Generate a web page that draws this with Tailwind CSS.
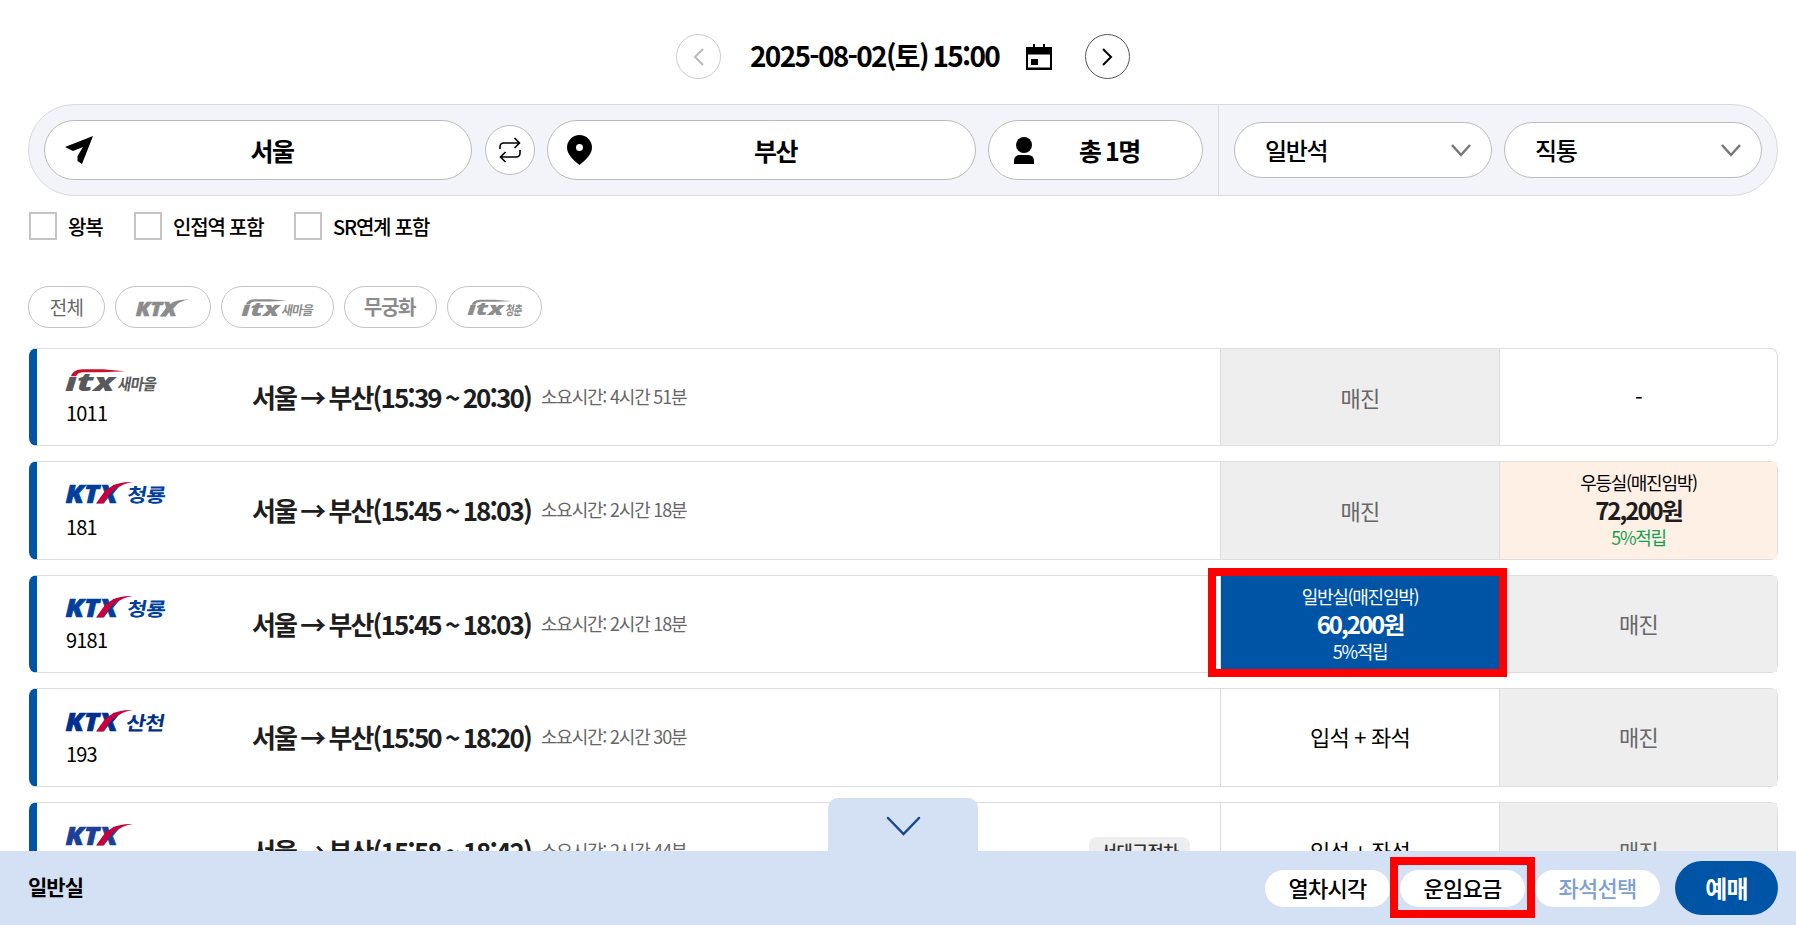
<!DOCTYPE html>
<html lang="ko">
<head>
  <meta charset="UTF-8">
  <meta name="viewport" content="width=device-width, initial-scale=1">
  <title>승차권 예매 - 열차 조회</title>
  <script src="https://cdn.jsdelivr.net/npm/@tailwindcss/browser@4"></script>
  <style>
    /* keep the colon on the baseline between digits */
    body, strong { font-variant-ligatures: none; font-feature-settings: "calt" 0, "clig" 0, "liga" 0; }
  </style>
</head>
<body class="relative h-[925px] overflow-hidden bg-white font-['Noto_Sans_CJK_KR',sans-serif] tracking-[-0.8px] text-black">

  <!-- Logo symbols: letters use currentColor, swoosh uses the inherited fill -->
  <svg class="hidden">
    <symbol id="ktx" viewBox="0 0 68 24" overflow="visible">
      <text x="-0.500" y="23" textLength="52" lengthAdjust="spacingAndGlyphs" fill="currentColor" stroke="currentColor" stroke-width="0.700" font-family="Open Sans" font-weight="800" font-style="italic" font-size="25" letter-spacing="0">KTX</text>
      <path d="M30 23.500H37.500C44 13 52 4 67 2C52 1 42 7 37.500 13Z"/>
    </symbol>
    <symbol id="itx" viewBox="0 0 62 24" overflow="visible">
      <text x="-1" y="23" textLength="51" lengthAdjust="spacingAndGlyphs" fill="currentColor" font-family="Open Sans" font-weight="800" font-style="italic" font-size="25" letter-spacing="0">ıtx</text>
      <path d="M5 8C8 2 12 1 20 1H38L61 3L38 4H20C14 4 12 5 10.500 8Z"/>
    </symbol>
  </svg>

  <!-- Date -->
  <div class="flex h-[104px] items-start pt-[34px] pl-[676px]">
    <button class="flex size-[45px] items-center justify-center rounded-full border border-[#ccc]">
      <svg class="h-5 w-3 fill-none stroke-[#bbb] stroke-2" viewBox="0 0 12 20"><path d="M10 2L2 10L10 18"/></svg>
    </button>
    <strong class="ml-[29px] w-[251px] text-[28px] leading-[43px] font-bold tracking-[-1.7px] whitespace-nowrap [word-spacing:-1.5px]">2025-08-02(토) 15:00</strong>
    <svg class="mt-[10px] ml-[25px] h-[26px] w-[26px]" viewBox="0 0 26 26">
      <path fill-rule="evenodd" d="M0 3H7V0H9V3H17V0H19V3H26V26H0ZM2 10.500V23.500H24V10.500Z"/>
      <path d="M5 15H12V21H5Z"/>
    </svg>
    <button class="ml-[33px] flex size-[45px] items-center justify-center rounded-full border border-[#555]">
      <svg class="h-5 w-3 fill-none stroke-black stroke-2" viewBox="0 0 12 20"><path d="M1 2L9 10L1 18"/></svg>
    </button>
  </div>

  <!-- Search bar -->
  <div class="mr-[18px] ml-7 flex h-[92px] items-center rounded-full border border-[#d8dade] bg-[#f3f4f9] pl-[15px]">
    <div class="flex h-[60px] w-[428px] items-center rounded-full border border-[#bbb] bg-white">
      <svg class="ml-5 h-[28px] w-[28px]" viewBox="0 0 28 28"><path d="M0 11L28 0L17 28L12.500 25V20L18 11L8 15Z"/></svg>
      <span class="mr-5 flex-1 pt-0.5 text-center text-[25px] font-bold tracking-[-1.5px]">서울</span>
    </div>
    <button class="ml-[13px] flex size-[50px] items-center justify-center rounded-full border border-[#bbb] bg-white">
      <svg class="size-[26px] fill-none stroke-black stroke-[1.600]" viewBox="0 0 26 26"><path d="M3 12V10Q3 6 7 6H22M17.500 1L22.500 6L17.500 11M23 13V16Q23 20 19 20H4M8.500 15L3.500 20L8.500 25"/></svg>
    </button>
    <div class="ml-3 flex h-[60px] w-[429px] items-center rounded-full border border-[#bbb] bg-white">
      <svg class="ml-[19px] h-[30px] w-[25px]" viewBox="0 0 25 30"><path fill-rule="evenodd" d="M12.500 0A12.500 12.500 0 0 1 25 12.500C25 19 19 25 12.500 30C6 25 0 19 0 12.500A12.500 12.500 0 0 1 12.500 0ZM12.500 9A3.500 3.500 0 1 0 12.500 16A3.500 3.500 0 0 0 12.500 9Z"/></svg>
      <span class="mr-4 flex-1 pt-0.5 text-center text-[25px] font-bold tracking-[-1.5px]">부산</span>
    </div>
    <div class="ml-3 flex h-[60px] w-[215px] items-center rounded-full border border-[#bbb] bg-white">
      <svg class="ml-[25px] h-[27px] w-[20px]" viewBox="0 0 20 27"><ellipse cx="10" cy="8" rx="8" ry="8"/><path d="M0 27V24Q0 18 6 18H14Q20 18 20 24V27Z"/></svg>
      <span class="ml-[45px] pt-0.5 text-[25px] font-bold tracking-[-1.5px] [word-spacing:-1px]">총 1명</span>
    </div>
    <div class="ml-[15px] flex h-full flex-1 items-center gap-3 border-l border-[#d8dade] pl-[15px]">
      <div class="flex h-[56px] w-[258px] items-center justify-between rounded-full border border-[#bbb] bg-white pr-5 pl-[30px] text-[24px] font-medium tracking-[-1.3px]">
        일반석
        <svg class="h-[13px] w-5 fill-none stroke-[#777] stroke-[2.500]" viewBox="0 0 20 13"><path d="M1 1L10 11L19 1"/></svg>
      </div>
      <div class="flex h-[56px] w-[258px] items-center justify-between rounded-full border border-[#bbb] bg-white pr-5 pl-[30px] text-[24px] font-medium tracking-[-1.3px]">
        직통
        <svg class="h-[13px] w-5 fill-none stroke-[#777] stroke-[2.500]" viewBox="0 0 20 13"><path d="M1 1L10 11L19 1"/></svg>
      </div>
    </div>
  </div>

  <!-- Options -->
  <div class="mt-4 ml-[29px] flex h-7 items-center text-[20px] font-medium tracking-[-1.2px] whitespace-nowrap">
    <label class="flex w-[105px] items-center gap-[11px]"><i class="size-7 border-2 border-[#c4c4c4]"></i><span class="leading-7 pt-0.5">왕복</span></label>
    <label class="flex w-[160px] items-center gap-[11px]"><i class="size-7 border-2 border-[#c4c4c4]"></i><span class="leading-7 pt-0.5">인접역 포함</span></label>
    <label class="flex items-center gap-[11px]"><i class="size-7 border-2 border-[#c4c4c4]"></i><span class="leading-7 pt-0.5">SR연계 포함</span></label>
  </div>

  <!-- Train type filter -->
  <div class="mt-[46px] ml-7 flex h-[42px] gap-[10px] text-[#8c8c8c]">
    <button class="w-[77px] rounded-full border border-[#c4c4c4] text-[19px] text-[#666]">전체</button>
    <button class="flex w-[96px] items-center rounded-full border border-[#c4c4c4] pl-5">
      <svg class="h-[19px] w-[54px] overflow-visible fill-current"><use href="#ktx"/></svg>
    </button>
    <button class="flex w-[113px] items-center rounded-full border border-[#c4c4c4] pl-5">
      <svg class="h-[19px] w-[72px] overflow-visible fill-current"><use href="#itx" width="46" height="19"/><text x="39" y="17" textLength="31" lengthAdjust="spacingAndGlyphs" font-size="13" font-weight="700" transform="skewX(-10) translate(3)">새마을</text></svg>
    </button>
    <button class="w-[93px] rounded-full border border-[#c4c4c4] pr-0.5 text-[20px] font-bold tracking-[-1.2px]">무궁화</button>
    <button class="flex w-[95px] items-center rounded-full border border-[#c4c4c4] pl-5">
      <svg class="h-[19px] w-[56px] overflow-visible fill-current"><use href="#itx" width="44" height="19"/><text x="37" y="17" textLength="16" lengthAdjust="spacingAndGlyphs" font-size="13" font-weight="700" transform="skewX(-10) translate(3)">청춘</text></svg>
    </button>
  </div>

  <!-- Train list -->
  <div class="mt-5 mr-[18px] ml-[29px] flex flex-col gap-[15px] text-[22px]">
    <div class="flex h-[98.400px] shrink-0 rounded-lg border border-l-8 border-[#ddd] border-l-[#0054a6]">
      <div class="w-[215px] pt-[19px] pl-[29px]">
        <svg class="h-6 w-[100px] overflow-visible fill-[#c8102e] text-[#58595b]"><use href="#itx" width="60" height="24"/><text x="52" y="22" textLength="38" lengthAdjust="spacingAndGlyphs" fill="currentColor" font-size="16" font-weight="700" transform="skewX(-10) translate(3)">새마을</text></svg>
        <p class="mt-[6px] text-xl leading-[30px]">1011</p>
      </div>
      <div class="flex flex-1 items-center gap-[10px] pb-0.5">
        <strong class="text-[26px] font-bold tracking-[-1.9px] text-[#1e1e1e] [word-spacing:-1.2px]">서울 → 부산(15:39 ~ 20:30)</strong>
        <span class="text-[18px] tracking-[-1.2px] text-[#666]">소요시간: 4시간 51분</span>
      </div>
      <div class="flex w-[279px] items-center justify-center border-l border-[#ddd] bg-[#eee] text-[#666]">매진</div>
      <div class="flex w-[278px] items-center justify-center border-l border-[#ddd] pb-0.5">-</div>
    </div>

    <div class="flex h-[98.400px] shrink-0 rounded-lg border border-l-8 border-[#ddd] border-l-[#0054a6]">
      <div class="w-[215px] pt-[18px] pl-[29px]">
        <svg class="h-6 w-[104px] overflow-visible fill-[#c8003c] text-[#00409c]"><use href="#ktx" width="68" height="24"/><text x="61" y="22" textLength="38" lengthAdjust="spacingAndGlyphs" fill="currentColor" font-size="19" font-weight="700" transform="skewX(-10) translate(3)">청룡</text></svg>
        <p class="mt-2 text-xl leading-[30px]">181</p>
      </div>
      <div class="flex flex-1 items-center gap-[10px] pb-0.5">
        <strong class="text-[26px] font-bold tracking-[-1.9px] text-[#1e1e1e] [word-spacing:-1.2px]">서울 → 부산(15:45 ~ 18:03)</strong>
        <span class="text-[18px] tracking-[-1.2px] text-[#666]">소요시간: 2시간 18분</span>
      </div>
      <div class="flex w-[279px] items-center justify-center border-l border-[#ddd] bg-[#eee] text-[#666]">매진</div>
      <div class="flex w-[278px] flex-col items-center justify-center border-l border-[#ddd] bg-[#fff0e6] pb-0.5 text-[18px] leading-[28px] tracking-[-1.3px]">
        <span>우등실(매진임박)</span>
        <strong class="text-2xl leading-[28px] font-bold tracking-[-2px] text-[#1e1e1e]">72,200원</strong>
        <span class="leading-[27px] text-[#12a150]">5%적립</span>
      </div>
    </div>

    <div class="flex h-[98.400px] shrink-0 rounded-lg border border-l-8 border-[#ddd] border-l-[#0054a6]">
      <div class="w-[215px] pt-[18px] pl-[29px]">
        <svg class="h-6 w-[104px] overflow-visible fill-[#c8003c] text-[#00409c]"><use href="#ktx" width="68" height="24"/><text x="61" y="22" textLength="38" lengthAdjust="spacingAndGlyphs" fill="currentColor" font-size="19" font-weight="700" transform="skewX(-10) translate(3)">청룡</text></svg>
        <p class="mt-[7px] text-xl leading-[30px]">9181</p>
      </div>
      <div class="flex flex-1 items-center gap-[10px] pb-px">
        <strong class="text-[26px] font-bold tracking-[-1.9px] text-[#1e1e1e] [word-spacing:-1.2px]">서울 → 부산(15:45 ~ 18:03)</strong>
        <span class="text-[18px] tracking-[-1.2px] text-[#666]">소요시간: 2시간 18분</span>
      </div>
      <div class="relative flex w-[279px] flex-col items-center justify-center border-l border-[#ddd] bg-[#0054a6] pb-px text-[18px] leading-[28px] tracking-[-1.3px] text-white">
        <span>일반실(매진임박)</span>
        <strong class="text-2xl leading-[28px] font-bold tracking-[-2px]">60,200원</strong>
        <span class="leading-[27px]">5%적립</span>
        <!-- highlight frame -->
        <div class="absolute -top-2 -left-[13px] h-[109px] w-[299px] border-8 border-[#f00]"></div>
      </div>
      <div class="flex w-[278px] items-center justify-center border-l border-[#ddd] bg-[#eee] text-[#666]">매진</div>
    </div>

    <div class="flex h-[98.400px] shrink-0 rounded-lg border border-l-8 border-[#ddd] border-l-[#0054a6]">
      <div class="w-[215px] pt-[19px] pl-[29px]">
        <svg class="h-6 w-[104px] overflow-visible fill-[#c8003c] text-[#002f8e]"><use href="#ktx" width="68" height="24"/><text x="60" y="22" textLength="38" lengthAdjust="spacingAndGlyphs" fill="currentColor" font-size="19" font-weight="700" transform="skewX(-10) translate(3)">산천</text></svg>
        <p class="mt-[7px] text-xl leading-[30px]">193</p>
      </div>
      <div class="flex flex-1 items-center gap-[10px] pb-0.5">
        <strong class="text-[26px] font-bold tracking-[-1.9px] text-[#1e1e1e] [word-spacing:-1.2px]">서울 → 부산(15:50 ~ 18:20)</strong>
        <span class="text-[18px] tracking-[-1.2px] text-[#666]">소요시간: 2시간 30분</span>
      </div>
      <div class="flex w-[279px] items-center justify-center border-l border-[#ddd] pb-0.5">입석 + 좌석</div>
      <div class="flex w-[278px] items-center justify-center border-l border-[#ddd] bg-[#eee] pb-0.5 text-[#666]">매진</div>
    </div>

    <div class="flex h-[98.400px] shrink-0 rounded-lg border border-l-8 border-[#ddd] border-l-[#0054a6]">
      <div class="w-[215px] pt-[19px] pl-[29px]">
        <svg class="h-6 w-[68px] overflow-visible fill-[#c8003c] text-[#1c3f97]"><use href="#ktx" width="68" height="24"/></svg>
      </div>
      <div class="flex flex-1 items-center gap-[10px]">
        <strong class="text-[26px] font-bold tracking-[-1.9px] text-[#1e1e1e] [word-spacing:-1.2px]">서울 → 부산(15:58 ~ 18:42)</strong>
        <span class="text-[18px] tracking-[-1.2px] text-[#666]">소요시간: 2시간 44분</span>
        <span class="mt-0.5 mr-[30px] ml-auto h-[30px] w-[101px] rounded-lg bg-[#eee] text-center text-[18px] leading-[28px] font-medium tracking-[-1px] text-[#333]">서대구정차</span>
      </div>
      <div class="flex w-[279px] items-center justify-center border-l border-[#ddd]">입석 + 좌석</div>
      <div class="flex w-[278px] items-center justify-center border-l border-[#ddd] bg-[#eee] text-[#666]">매진</div>
    </div>
  </div>

  <!-- Bottom bar -->
  <div class="absolute inset-x-0 bottom-0 flex h-[74px] items-center bg-[#d4e0f4] pr-[18px] pl-7 text-[22px] font-medium">
    <button class="absolute -top-[53px] left-[828px] h-[53px] w-[150px] rounded-t-[10px] bg-[#d4e0f4]">
      <svg class="mx-auto mt-0.5 h-5 w-[35px] fill-none stroke-[#15498c] stroke-[2.500]" viewBox="0 0 35 20"><path stroke-linecap="round" d="M2 2L17.500 18L33 2"/></svg>
    </button>
    <strong class="flex-1 pb-0.5 text-[21px] font-bold tracking-[-1px]">일반실</strong>
    <button class="h-[37px] w-[125px] rounded-full bg-white pb-0.5">열차시각</button>
    <div class="relative ml-[10px]">
      <button class="h-[37px] w-[125px] rounded-full bg-white pb-0.5">운임요금</button>
      <!-- highlight frame -->
      <div class="absolute -top-[13px] -left-[10px] h-[61px] w-[145px] border-8 border-[#f00]"></div>
    </div>
    <button class="ml-[10px] h-[37px] w-[125px] rounded-full bg-white pb-0.5 text-[#809fcf]">좌석선택</button>
    <button class="ml-[15px] h-[54px] w-[103px] rounded-full bg-[#0054a6] text-2xl font-bold text-white">예매</button>
  </div>

</body>
</html>
